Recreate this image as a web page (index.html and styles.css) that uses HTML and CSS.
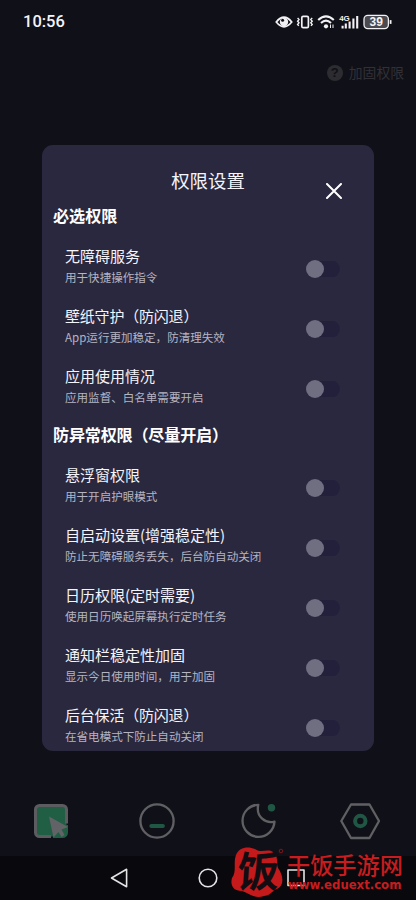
FILE: index.html
```html
<!DOCTYPE html>
<html lang="zh-CN">
<head>
<meta charset="utf-8">
<title>权限设置</title>
<link rel="stylesheet" href="styles.css">
</head>
<body>
<div class="screen">
  <header class="status">
    <span class="clock">10:56</span>
    <svg class="status-icons" width="120" height="20" viewBox="0 0 120 20" fill="none" stroke="#f2f2f4">
      <path d="M1.300 10Q9 .5 16.700 10Q9 19.500 1.300 10Z" stroke-width="1.800"/>
      <circle cx="9" cy="10" r="4.200" fill="#f2f2f4" stroke="none"/>
      <circle cx="7.600" cy="8.200" r="1.500" fill="#101018" stroke="none"/>
      <rect x="26.800" y="4.300" width="6.600" height="11.400" rx="1.400" stroke-width="1.700"/>
      <path d="M22.600 6l1.400 1.500-1.400 1.700 1.400 1.600-1.400 1.700 1.200 1.400M37.200 6L35.800 7.500l1.400 1.700-1.400 1.600 1.400 1.700-1.200 1.400" stroke-width="1.400"/>
      <path d="M43.200 7.900Q51 .7 58.800 7.900M46 10.900Q51 6.300 56 10.900" stroke-width="2.100"/>
      <circle cx="51" cy="14.300" r="2.100" fill="#f2f2f4" stroke="none"/>
      <path d="M55.500 12.500v3.500M58 12.500v3.500" stroke-width="1"/>
      <text class="net" x="64.300" y="9">4G</text>
      <path d="M67.600 13.700V16.500M70.800 11.500V16.500M74.600 9.500V16.500M78.400 6.500V16.500M82.200 3.900V16.500" stroke-width="2.100"/>
      <rect x="89" y="3.400" width="24.400" height="13.200" rx="3.800" fill="#4a4a50" stroke-width="1.300"/>
      <path d="M115.600 8.100v3.800" stroke-width="1.800"/>
      <text class="charge" x="101.200" y="14.200">39</text>
    </svg>
  </header>
  <div class="toolbar">
    <span class="help">?</span>
    <span>加固权限</span>
  </div>

  <main class="dialog">
    <div class="dialog-head">
      <h1>权限设置</h1>
      <svg class="close" width="16" height="16" viewBox="0 0 16 16"><path d="M1 1L15 15M15 1L1 15"/></svg>
    </div>
    <h2>必选权限</h2>
    <div class="row"><div><h3>无障碍服务</h3><p>用于快捷操作指令</p></div><span class="switch"></span></div>
    <div class="row"><div><h3 class="tight">壁纸守护（防闪退）</h3><p>App运行更加稳定，防清理失效</p></div><span class="switch"></span></div>
    <div class="row"><div><h3>应用使用情况</h3><p>应用监督、白名单需要开启</p></div><span class="switch"></span></div>
    <h2 class="tight">防异常权限（尽量开启）</h2>
    <div class="row"><div><h3>悬浮窗权限</h3><p>用于开启护眼模式</p></div><span class="switch"></span></div>
    <div class="row"><div><h3>自启动设置(增强稳定性)</h3><p>防止无障碍服务丢失，后台防自动关闭</p></div><span class="switch"></span></div>
    <div class="row"><div><h3>日历权限(定时需要)</h3><p>使用日历唤起屏幕执行定时任务</p></div><span class="switch"></span></div>
    <div class="row"><div><h3>通知栏稳定性加固</h3><p>显示今日使用时间，用于加固</p></div><span class="switch"></span></div>
    <div class="row"><div><h3 class="tight">后台保活（防闪退）</h3><p>在省电模式下防止自动关闭</p></div><span class="switch"></span></div>
  </main>

  <nav class="tabs">
    <svg width="40" height="40" viewBox="0 0 40 40">
      <rect x="4.500" y="4.500" width="31" height="31" rx="4" fill="#215f45"/>
      <path d="M22 35.500H31.500a4 4 0 0 0 4-4V24" fill="none" stroke="#215f45" stroke-width="3"/>
      <path d="M35.500 22.500V8.500a4 4 0 0 0-4-4H8.500a4 4 0 0 0-4 4V31.500a4 4 0 0 0 4 4H20" fill="none" stroke="#5c5c60" stroke-width="3"/>
      <path d="M18 15.500L37 26L30.500 28.500L33.500 34L30.500 36L27.500 31L22.500 36.500Z" fill="#626367"/>
    </svg>
    <svg width="40" height="40" viewBox="0 0 40 40" fill="none">
      <circle cx="20" cy="20" r="16.600" stroke="#606064" stroke-width="2.300"/>
      <path d="M14.300 24.900h11.600" stroke="#205744" stroke-width="4" stroke-linecap="round"/>
    </svg>
    <svg width="40" height="40" viewBox="0 0 40 40" fill="none">
      <path d="M19.300 3.800A16 16 0 1 0 35.500 20.600C27 23 16.500 16 19.300 3.800Z" stroke="#606064" stroke-width="2.300" stroke-linejoin="round"/>
      <circle cx="32.500" cy="6.800" r="3.700" fill="#205744"/>
    </svg>
    <svg width="40" height="40" viewBox="0 0 40 40" fill="none">
      <path d="M11 3.500H29.500L39 20L29.500 37H11L1.300 20Z" stroke="#606064" stroke-width="2.300" stroke-linejoin="round"/>
      <circle cx="20.300" cy="20" r="5.200" stroke="#205744" stroke-width="4"/>
    </svg>
  </nav>
  <footer class="sysnav">
    <svg width="20" height="22" viewBox="0 0 20 22"><path d="M2.500 11L17.600 2.300V19.700Z"/></svg>
    <svg width="20" height="22" viewBox="0 0 20 22"><circle cx="10" cy="11" r="8.800"/></svg>
    <svg width="20" height="22" viewBox="0 0 20 22"><rect x="2" y="3" width="16" height="15.500"/></svg>
  </footer>

  <div class="mark">
    <svg class="seal" width="56" height="54" viewBox="0 0 56 54">
      <path d="M6 9C9 1 18 0 25 3C32 8 37 2 43 6C49 10 46 17 48 22C54 30 54 40 47 43C42 44 42 49 34 50C25 53 20 48 12 45C3 45 0 39 2 32C7 25 3 17 6 9Z" fill="#c41a1b"/>
      <text transform="translate(6.500 41) skewX(-4)">饭</text>
      <circle cx="51" cy="5" r="1.800" fill="none" stroke="#7d1619"/>
    </svg>
    <div class="mark-text"><b>干饭手游网</b><span>www.eduext.com</span></div>
  </div>
</div>
</body>
</html>
```
FILE: styles.css
```css
* { box-sizing: border-box; }
body {
  margin: 0;
  background: #101018;
  color: #f4f4fa;
  font-family: "Noto Sans CJK SC", sans-serif;
}
.screen {
  position: relative;
  width: 416px;
  height: 900px;
  overflow: hidden;
  display: flex;
  flex-direction: column;
}
.status {
  height: 42px;
  padding: 1px 21px 0 23px;
  display: flex;
  align-items: center;
  justify-content: space-between;
}
.clock { font: 500 16.5px/20px Roboto, sans-serif; }
.status-icons { display: block; }
.net { font: 700 8px "Liberation Sans", sans-serif; fill: #f2f2f4; stroke: none; letter-spacing: -0.3px; }
.charge { font: 700 12px "Liberation Sans", sans-serif; fill: #f2f2f4; stroke: none; text-anchor: middle; }
.toolbar {
  height: 103px;
  padding: 20px 12px 0 0;
  display: flex;
  justify-content: flex-end;
  gap: 6px;
  color: #303036;
  font-size: 13.8px;
  line-height: 20px;
}
.help {
  width: 16px;
  height: 16px;
  margin-top: 3px;
  border-radius: 50%;
  background: #2c2c31;
  color: #101018;
  font: 700 13px/16px "Liberation Sans", sans-serif;
  text-align: center;
}
.dialog {
  width: 332px;
  height: 606px;
  margin: 0 auto 0 42px;
  flex: none;
  overflow: hidden;
  border-radius: 11px;
  background: #29283f;
}
.dialog-head {
  display: grid;
  grid-template-columns: 60px 1fr 60px;
  height: 53.5px;
  padding-top: 22px;
}
h1, h2, h3, p { margin: 0; }
h1 {
  grid-column: 2;
  font-size: 18.4px;
  line-height: 27px;
  font-weight: 400;
  text-align: center;
}
.close { margin: 16px 0 0 12px; fill: none; stroke: #fff; stroke-width: 2; stroke-linecap: round; }
h2 {
  height: 39px;
  padding-left: 11px;
  font-size: 16.1px;
  line-height: 32px;
  font-weight: 700;
  color: #fff;
}
.row {
  height: 60px;
  padding: 7px 34px 0 23px;
  display: flex;
  justify-content: space-between;
}
h3 { font-size: 15px; line-height: 22px; font-weight: 400; }
.tight { letter-spacing: -0.2px; }
p { font-size: 11.55px; line-height: 21px; color: #b5b4c1; white-space: nowrap; }
.switch {
  width: 34px;
  height: 18px;
  margin-top: 15px;
  display: flex;
  background: linear-gradient(#23203c, #23203c) right center / 24px 16px no-repeat;
  border-radius: 9px;
}
.switch::before { content: ""; width: 18px; height: 18px; border-radius: 50%; background: #706f82; }
.tabs {
  height: 69px;
  margin-top: 36px;
  padding: 14px 0 0 30.5px;
  display: grid;
  grid-template-columns: 106.5px 101.5px 101.5px 40px;
}
.sysnav {
  height: 44px;
  padding: 11px 110px 0 109px;
  display: flex;
  justify-content: space-between;
  background: #09090d;
}
.sysnav svg { fill: none; stroke: #e4e4e7; stroke-width: 1.6; stroke-linejoin: round; }
.mark {
  position: absolute;
  left: 230px;
  top: 846px;
  display: flex;
  color: #c81c1e;
}
.seal { overflow: visible; }
.seal text {
  font: 700 42px "Noto Sans CJK SC", sans-serif;
  fill: #110d12;
}
.mark-text { padding: 5px 0 0 1px; }
.mark-text b, .mark-text span { display: block; white-space: nowrap; }
.mark-text b { font-size: 23.2px; line-height: 27px; font-weight: 500; }
.mark-text span { padding-left: 1px; font: 700 11.7px/15px "DejaVu Sans", sans-serif; }
```
